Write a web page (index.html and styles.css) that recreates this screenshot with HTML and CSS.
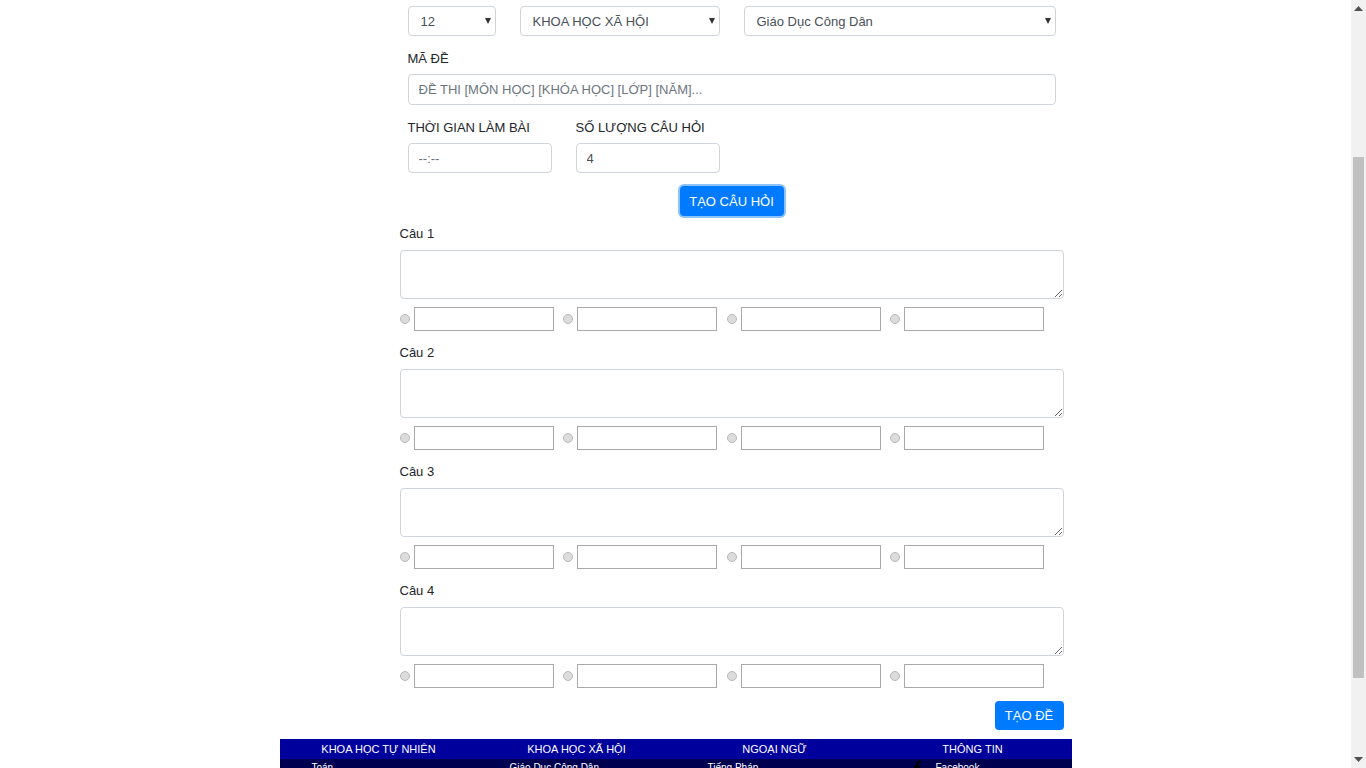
FILE: index.html
```html
<!DOCTYPE html>
<html lang="vi">
<head>
<meta charset="utf-8">
<title>Tạo đề thi</title>
<link rel="stylesheet" href="styles.css">
</head>
<body>
<div class="window">
<div class="viewport">
<div class="page">
  <form class="exam-form">
    <div class="row selects">
      <div class="select-wrap w-grade">
        <select class="ctl"><option>12</option></select>
      </div>
      <div class="select-wrap w-block">
        <select class="ctl"><option>KHOA HỌC XÃ HỘI</option></select>
      </div>
      <div class="select-wrap w-subject">
        <select class="ctl"><option>Giáo Dục Công Dân</option></select>
      </div>
    </div>

    <div class="field">
      <label class="lbl">MÃ ĐỀ</label>
      <input class="ctl code" type="text" placeholder="ĐỀ THI [MÔN HỌC] [KHÓA HỌC] [LỚP] [NĂM]...">
    </div>

    <div class="row pair">
      <div class="field small">
        <label class="lbl">THỜI GIAN LÀM BÀI</label>
        <input class="ctl" type="text" placeholder="--:--">
      </div>
      <div class="field small">
        <label class="lbl">SỐ LƯỢNG CÂU HỎI</label>
        <input class="ctl num" type="text" value="4">
      </div>
    </div>

    <div class="center">
      <button type="button" class="btn focus">TẠO CÂU HỎI</button>
    </div>

    <div class="questions">
      <div class="question">
        <label class="q-lbl">Câu 1</label>
        <textarea class="q-text"></textarea>
        <div class="answers">
          <span class="ans"><input type="radio" name="q1"><input type="text" class="ans-in"></span>
          <span class="ans"><input type="radio" name="q1"><input type="text" class="ans-in"></span>
          <span class="ans"><input type="radio" name="q1"><input type="text" class="ans-in"></span>
          <span class="ans"><input type="radio" name="q1"><input type="text" class="ans-in"></span>
        </div>
      </div>
      <div class="question">
        <label class="q-lbl">Câu 2</label>
        <textarea class="q-text"></textarea>
        <div class="answers">
          <span class="ans"><input type="radio" name="q2"><input type="text" class="ans-in"></span>
          <span class="ans"><input type="radio" name="q2"><input type="text" class="ans-in"></span>
          <span class="ans"><input type="radio" name="q2"><input type="text" class="ans-in"></span>
          <span class="ans"><input type="radio" name="q2"><input type="text" class="ans-in"></span>
        </div>
      </div>
      <div class="question">
        <label class="q-lbl">Câu 3</label>
        <textarea class="q-text"></textarea>
        <div class="answers">
          <span class="ans"><input type="radio" name="q3"><input type="text" class="ans-in"></span>
          <span class="ans"><input type="radio" name="q3"><input type="text" class="ans-in"></span>
          <span class="ans"><input type="radio" name="q3"><input type="text" class="ans-in"></span>
          <span class="ans"><input type="radio" name="q3"><input type="text" class="ans-in"></span>
        </div>
      </div>
      <div class="question">
        <label class="q-lbl">Câu 4</label>
        <textarea class="q-text"></textarea>
        <div class="answers">
          <span class="ans"><input type="radio" name="q4"><input type="text" class="ans-in"></span>
          <span class="ans"><input type="radio" name="q4"><input type="text" class="ans-in"></span>
          <span class="ans"><input type="radio" name="q4"><input type="text" class="ans-in"></span>
          <span class="ans"><input type="radio" name="q4"><input type="text" class="ans-in"></span>
        </div>
      </div>
    </div>

    <div class="right">
      <button type="button" class="btn submit">TẠO ĐỀ</button>
    </div>
  </form>

  <footer class="footer">
    <div class="f-head">
      <div class="f-col">KHOA HỌC TỰ NHIÊN</div>
      <div class="f-col">KHOA HỌC XÃ HỘI</div>
      <div class="f-col">NGOẠI NGỮ</div>
      <div class="f-col">THÔNG TIN</div>
    </div>
    <div class="f-body">
      <ul class="f-list">
        <li>Toán</li><li>Vật Lý</li><li>Hóa Học</li><li>Sinh Học</li>
      </ul>
      <ul class="f-list">
        <li>Giáo Dục Công Dân</li><li>Lịch Sử</li><li>Địa Lý</li><li>Ngữ Văn</li>
      </ul>
      <ul class="f-list">
        <li>Tiếng Pháp</li><li>Tiếng Anh</li><li>Tiếng Nhật</li><li>Tiếng Trung</li>
      </ul>
      <ul class="f-list info">
        <li><svg class="fb" viewBox="0 0 10 18" width="8" height="14"><path d="M6.5 18V10h2.6l.4-3H6.5V5.1c0-.9.3-1.5 1.5-1.5h1.6V.9C9.3.8 8.4.7 7.3.7 5 .7 3.5 2.1 3.5 4.6V7H1v3h2.5v8z" fill="#000"/></svg>Facebook</li>
        <li>Email</li><li>Điện thoại</li><li>Địa chỉ</li>
      </ul>
    </div>
  </footer>
</div>
</div>
<div class="scrollbar">
  <div class="sb-btn"><svg width="9" height="5" viewBox="0 0 9 5"><path d="M0 5L4.5 0L9 5z" fill="#505050"/></svg></div>
  <div class="sb-track">
    <div class="sb-space-top"></div>
    <div class="sb-thumb"></div>
  </div>
  <div class="sb-btn"><svg width="9" height="5" viewBox="0 0 9 5"><path d="M0 0L4.5 5L9 0z" fill="#505050"/></svg></div>
</div>
</div>
</body>
</html>
```

FILE: styles.css
```css
* { box-sizing: border-box; }

html, body {
  margin: 0;
  padding: 0;
  background: #fff;
  overflow: hidden;
}

body {
  font-family: "Liberation Sans", Arial, sans-serif;
  font-size: 13px;
  color: #212529;
}

.window {
  display: flex;
  height: 100vh;
  overflow: hidden;
}
.viewport {
  flex: 1;
  overflow: hidden;
}

/* browser scrollbar */
.scrollbar {
  width: 15px;
  flex: none;
  display: flex;
  flex-direction: column;
  background: #f1f1f1;
}
.sb-btn {
  height: 17px;
  display: flex;
  align-items: center;
  justify-content: center;
}
.sb-track {
  flex: 1;
  display: flex;
  flex-direction: column;
  align-items: center;
}
.sb-space-top { height: 140px; }
.sb-thumb {
  width: 11px;
  height: 521px;
  background: #c1c1c1;
}

.page {
  width: 792px;
  margin: 0 auto;
}

.exam-form {
  width: 664px;
  margin-left: 120px;
  padding-top: 6px;
}

.row {
  display: flex;
  gap: 24px;
  padding: 0 8px;
}

.select-wrap {
  position: relative;
  height: 30px;
}
.select-wrap::after {
  content: "";
  position: absolute;
  right: 5px;
  top: 12px;
  width: 0;
  height: 0;
  border-left: 3.5px solid transparent;
  border-right: 3.5px solid transparent;
  border-top: 6px solid #333;
  pointer-events: none;
}
.w-grade { width: 88px; }
.w-block { width: 200px; }
.w-subject { width: 312px; }

.ctl {
  display: block;
  width: 100%;
  height: 30px;
  border: 1px solid #ced4da;
  border-radius: 4px;
  background: #fff;
  font-family: inherit;
  font-size: 13px;
  color: #495057;
  padding: 0 12px;
  outline: none;
}
select.ctl {
  -webkit-appearance: none;
  appearance: none;
}
.ctl::placeholder { color: #6c757d; opacity: 1; }

.field {
  padding: 0 8px;
}
.lbl {
  display: block;
  line-height: 16px;
  margin: 15px 0 7px;
}
.code { height: 31px; padding-left: 10px; }

.pair .field { padding: 0; width: 144px; }
.pair .ctl { padding-left: 10px; }
.pair .ctl.num { padding-left: 10px; }

.center {
  display: flex;
  justify-content: center;
  margin-top: 13px;
}

.btn {
  height: 30px;
  border: 0;
  border-radius: 4px;
  background: #007bff;
  color: #fff;
  font-family: inherit;
  font-size: 13px;
  padding: 0;
  white-space: nowrap;
  cursor: pointer;
}
.btn.focus {
  width: 104px;
  box-shadow: 0 0 0 2px rgba(0, 123, 255, 0.45);
}
.btn.submit {
  width: 69px;
  height: 29px;
}

.questions {
  margin-top: 10px;
}
.question {
  margin-bottom: 14px;
}
.question:last-child {
  margin-bottom: 13px;
}
.q-lbl {
  display: block;
  line-height: 16px;
  margin-bottom: 8px;
}
.q-text {
  display: block;
  width: 664px;
  height: 49px;
  border: 1px solid #ced4da;
  border-radius: 4px;
  resize: vertical;
  margin: 0 0 8px;
  outline: none;
}

.answers {
  display: flex;
  gap: 9.5px;
  height: 24px;
}
.ans {
  display: flex;
  align-items: center;
  gap: 4px;
}
.ans input[type="radio"] {
  -webkit-appearance: none;
  appearance: none;
  width: 10px;
  height: 10px;
  margin: 0;
  border-radius: 50%;
  border: 1px solid #b8b8b8;
  background: #dcdcdc;
}
.ans-in {
  width: 140px;
  height: 24px;
  margin: 0;
  border: 1px solid #a9a9a9;
  border-radius: 0;
  padding: 0 4px;
  font-family: inherit;
  font-size: 13px;
  outline: none;
}

.right {
  display: flex;
  justify-content: flex-end;
}

.footer {
  margin-top: 9px;
  width: 792px;
  font-size: 11px;
}
.f-head {
  display: grid;
  grid-template-columns: repeat(4, 1fr);
  height: 20px;
  background: #00009c;
  color: #fff;
}
.f-col {
  text-align: center;
  line-height: 20px;
}
.f-body {
  display: grid;
  grid-template-columns: repeat(4, 1fr);
  background: #000050;
  color: #fff;
  padding-bottom: 120px;
}
.f-list {
  list-style: none;
  margin: 0;
  padding: 0 0 0 32px;
  font-size: 10px;
  line-height: 18px;
}
.f-list.info {
  padding-left: 39px;
}
.fb {
  vertical-align: -3px;
  margin-right: 15px;
}
```
